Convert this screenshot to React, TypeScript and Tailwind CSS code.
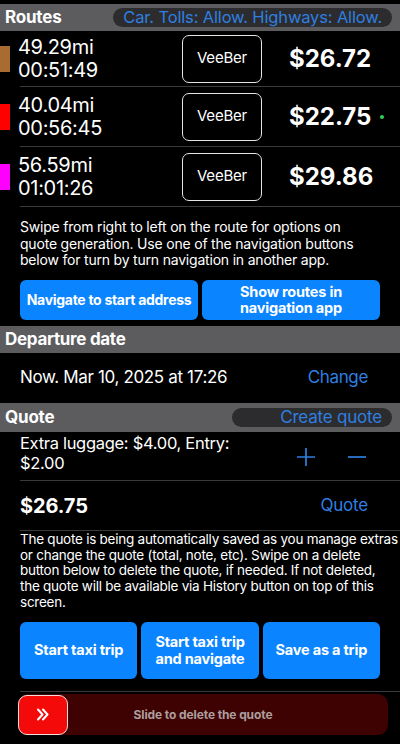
import React from "react";

const Sep = () => <div className="ml-[20px] h-px bg-[#3a3a3c]" />;

const routes = [
  { color: "bg-[#a86b32]", dist: "49.29mi", time: "00:51:49", price: "$26.72", dot: false, h: "h-[55px]" },
  { color: "bg-[#ff0000]", dist: "40.04mi", time: "00:56:45", price: "$22.75", dot: true, h: "h-[59px]" },
  { color: "bg-[#ff00ff]", dist: "56.59mi", time: "01:01:26", price: "$29.86", dot: false, h: "h-[59px]" },
];

export default function App() {
  return (
    <div
      className="w-[400px] h-[744px] bg-black overflow-hidden text-white pt-[4px]"
      style={{ fontFamily: "Inter, 'Noto Sans', sans-serif" }}
    >
      {/* Routes header */}
      <div className="h-[27px] bg-[#5c5c5e] flex items-center justify-between pl-[5px] pr-[8px]">
        <span className="text-[17px] font-bold tracking-[-0.2px]">Routes</span>
        <div className="h-[19px] w-[279px] rounded-full bg-[#2c2c2e] flex items-center justify-end pr-[10px] text-[16.5px] text-[#2f7fe0] tracking-[-0.15px] whitespace-nowrap">
          Car. Tolls: Allow. Highways: Allow.
        </div>
      </div>

      {routes.map((r, i) => (
        <div key={i}>
          <div className={`${r.h} flex items-center`}>
            <div className={`w-[10px] h-[26px] ${r.color}`} />
            <div className="ml-[8px] w-[164px] text-[20px] leading-[23px] tracking-[-0.3px]">
              <div>{r.dist}</div>
              <div>{r.time}</div>
            </div>
            <div className="w-[80px] h-[48px] rounded-[7px] border-[1.5px] border-[#e5e5e5] flex items-center justify-center text-[15px] tracking-[-0.2px]">
              VeeBer
            </div>
            <div className="ml-[27px] text-[24px] font-bold">{r.price}</div>
            {r.dot && <div className="ml-[9px] w-[4px] h-[4px] rounded-full bg-[#30d158]" />}
          </div>
          <Sep />
        </div>
      ))}

      <div className="pl-[20px] pt-[12px] text-[14px] leading-[16.5px] tracking-[-0.2px] whitespace-nowrap">
        Swipe from right to left on the route for options on
        <br />
        quote generation. Use one of the navigation buttons
        <br />
        below for turn by turn navigation in another app.
      </div>

      <div className="mt-[11.5px] px-[20px] flex gap-[4px]">
        <div className="flex-1 h-[40px] rounded-[6px] bg-[#0a84ff] flex items-center justify-center text-[14px] font-bold leading-[16.5px] text-center tracking-[-0.3px] whitespace-nowrap">
          Navigate to start address
        </div>
        <div className="flex-1 h-[40px] rounded-[6px] bg-[#0a84ff] flex items-center justify-center text-[14.5px] font-bold leading-[16.5px] text-center tracking-[-0.2px]">
          Show routes in
          <br />
          navigation app
        </div>
      </div>

      {/* Departure date */}
      <div className="mt-[6px] h-[27px] bg-[#5c5c5e] flex items-center pl-[5px]">
        <span className="text-[17px] font-bold tracking-[-0.3px]">Departure date</span>
      </div>
      <div className="h-[50px] flex items-center justify-between pl-[20px] pr-[32px] text-[17px] tracking-[-0.35px]">
        <span>Now. Mar 10, 2025 at 17:26</span>
        <span className="text-[#2f7fe0]">Change</span>
      </div>

      {/* Quote */}
      <div className="h-[29px] bg-[#5c5c5e] flex items-center justify-between pl-[5px] pr-[8px]">
        <span className="text-[17px] font-bold tracking-[-0.2px]">Quote</span>
        <div className="h-[19px] w-[160px] rounded-full bg-[#2c2c2e] flex items-center justify-end pr-[10px] text-[17px] text-[#2f7fe0] tracking-[-0.2px]">
          Create quote
        </div>
      </div>

      <div className="h-[48px] flex pl-[20px]">
        <div className="pt-[1px] w-[277px] text-[16.5px] leading-[20px] tracking-[-0.3px] whitespace-nowrap">
          Extra luggage: $4.00, Entry:
          <br />
          $2.00
        </div>
        <div className="flex items-center gap-[33px] mt-[1px]">
          <svg width="18" height="18" viewBox="0 0 18 18">
            <path d="M9 0V18M0 9H18" stroke="#2f7fe0" strokeWidth="1.7" />
          </svg>
          <svg width="18" height="18" viewBox="0 0 18 18">
            <path d="M0 9H18" stroke="#2f7fe0" strokeWidth="1.7" />
          </svg>
        </div>
      </div>
      <Sep />

      <div className="h-[49px] flex items-center justify-between pl-[20px] pr-[32px]">
        <span className="text-[20px] font-bold tracking-[-0.1px]">$26.75</span>
        <span className="text-[17px] text-[#2f7fe0] tracking-[-0.2px]">Quote</span>
      </div>
      <Sep />

      <div className="pl-[20px] pt-[1px] text-[13.5px] leading-[15.7px] tracking-[-0.25px] whitespace-nowrap">
        The quote is being automatically saved as you manage extras
        <br />
        or change the quote (total, note, etc). Swipe on a delete
        <br />
        button below to delete the quote, if needed. If not deleted,
        <br />
        the quote will be available via History button on top of this
        <br />
        screen.
      </div>

      <div className="mt-[11.5px] px-[20px] flex gap-[4px]">
        {[
          ["Start taxi trip"],
          ["Start taxi trip", "and navigate"],
          ["Save as a trip"],
        ].map((t) => (
          <div
            key={t.join()}
            className="flex-1 h-[57px] rounded-[6px] bg-[#0a84ff] flex flex-col items-center justify-center text-[14.5px] font-bold leading-[16.5px] text-center tracking-[-0.2px]"
          >
            {t.map((l) => (
              <span key={l}>{l}</span>
            ))}
          </div>
        ))}
      </div>

      <div className="mt-[12px]">
        <Sep />
      </div>

      <div className="mt-[2px] ml-[18px] w-[370px] h-[41px] rounded-[10px] bg-[#3f0202] flex items-center">
        <div className="w-[50px] h-[40px] rounded-[9px] bg-[#f50a0a] border-[1.5px] border-[#f3dcdc] flex items-center justify-center">
          <svg width="12" height="13" viewBox="0 0 12 13">
            <path d="M1 1.5L5.5 6.5L1 11.5M6 1.5L10.5 6.5L6 11.5" stroke="white" strokeWidth="2" fill="none" strokeLinecap="round" strokeLinejoin="round" />
          </svg>
        </div>
        <div className="flex-1 text-center text-[12px] font-bold text-[#ac9e9e] pr-[50px] tracking-[-0.1px]">
          Slide to delete the quote
        </div>
      </div>
    </div>
  );
}
